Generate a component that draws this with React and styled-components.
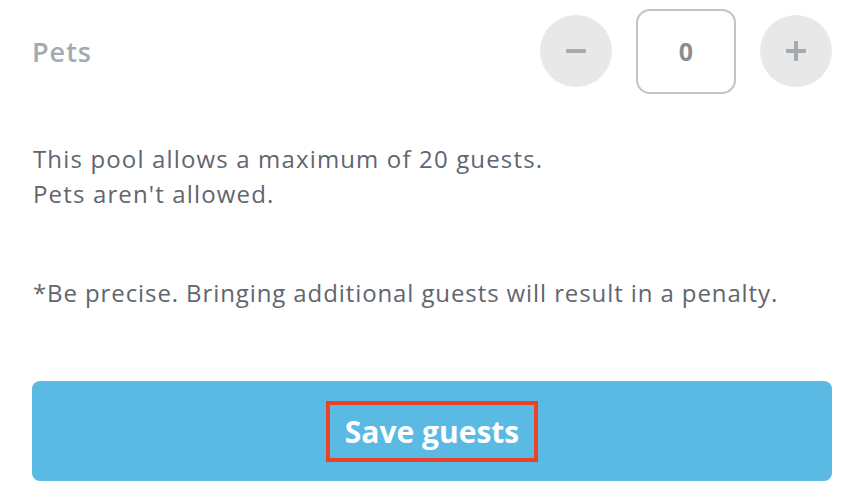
import styled, { createGlobalStyle } from "styled-components";

const GlobalStyle = createGlobalStyle`
  body {
    margin: 0;
    background: #ffffff;
    font-family: "Open Sans", "Liberation Sans", sans-serif;
  }
`;

const App = () => {
  return (
    <>
      <GlobalStyle />
      <Container>
        <CounterRow>
          <Label>Pets</Label>
          <Controls>
            <RoundButton aria-label="decrease">
              <Bar />
            </RoundButton>
            <CountBox>0</CountBox>
            <RoundButton aria-label="increase">
              <Bar />
              <Bar vertical />
            </RoundButton>
          </Controls>
        </CounterRow>
        <Notes>
          This pool allows a maximum of 20 guests.
          <br />
          Pets aren't allowed.
        </Notes>
        <Warning>
          *Be precise. Bringing additional guests will result in a penalty.
        </Warning>
        <SaveButton>
          <Highlight>Save guests</Highlight>
        </SaveButton>
      </Container>
    </>
  );
};

const Container = styled.div`
  width: 800px;
  padding: 8px 32px 10px;
  display: flex;
  flex-direction: column;
`;

const CounterRow = styled.div`
  display: flex;
  align-items: center;
  justify-content: space-between;
  height: 86px;
`;

const Label = styled.span`
  font-size: 27px;
  font-weight: 600;
  letter-spacing: 1px;
  color: #a4aab2;
`;

const Controls = styled.div`
  display: flex;
  align-items: center;
  gap: 24px;
`;

const RoundButton = styled.button`
  position: relative;
  width: 72px;
  height: 72px;
  border: none;
  border-radius: 50%;
  background: #e8e8e9;
  padding: 0;
  display: flex;
  align-items: center;
  justify-content: center;
`;

const Bar = styled.span`
  position: absolute;
  background: #a4aab2;
  border-radius: 1px;
  width: ${(p) => (p.vertical ? "4px" : "20px")};
  height: ${(p) => (p.vertical ? "20px" : "4px")};
`;

const CountBox = styled.div`
  width: 96px;
  height: 81px;
  border: 2px solid #c4c4c4;
  border-radius: 14px;
  display: flex;
  align-items: center;
  justify-content: center;
  font-size: 25px;
  font-weight: 700;
  color: #8c8c8c;
`;

const Notes = styled.p`
  margin: 47px 0 0 1px;
  font-size: 24px;
  letter-spacing: 1.15px;
  line-height: 35px;
  color: #5f6670;
`;

const Warning = styled.p`
  margin: 64px 0 0 1px;
  font-size: 24px;
  letter-spacing: 0.9px;
  line-height: 35px;
  color: #5f6670;
`;

const SaveButton = styled.button`
  margin-top: 71px;
  height: 100px;
  border: none;
  border-radius: 8px;
  background: #5bbae4;
  display: flex;
  align-items: center;
  justify-content: center;
  font-family: inherit;
`;

const Highlight = styled.span`
  border: 4px solid #e8432a;
  padding: 6px 15px;
  font-size: 30px;
  font-weight: 700;
  color: #ffffff;
  line-height: 41px;
`;

export default App;
